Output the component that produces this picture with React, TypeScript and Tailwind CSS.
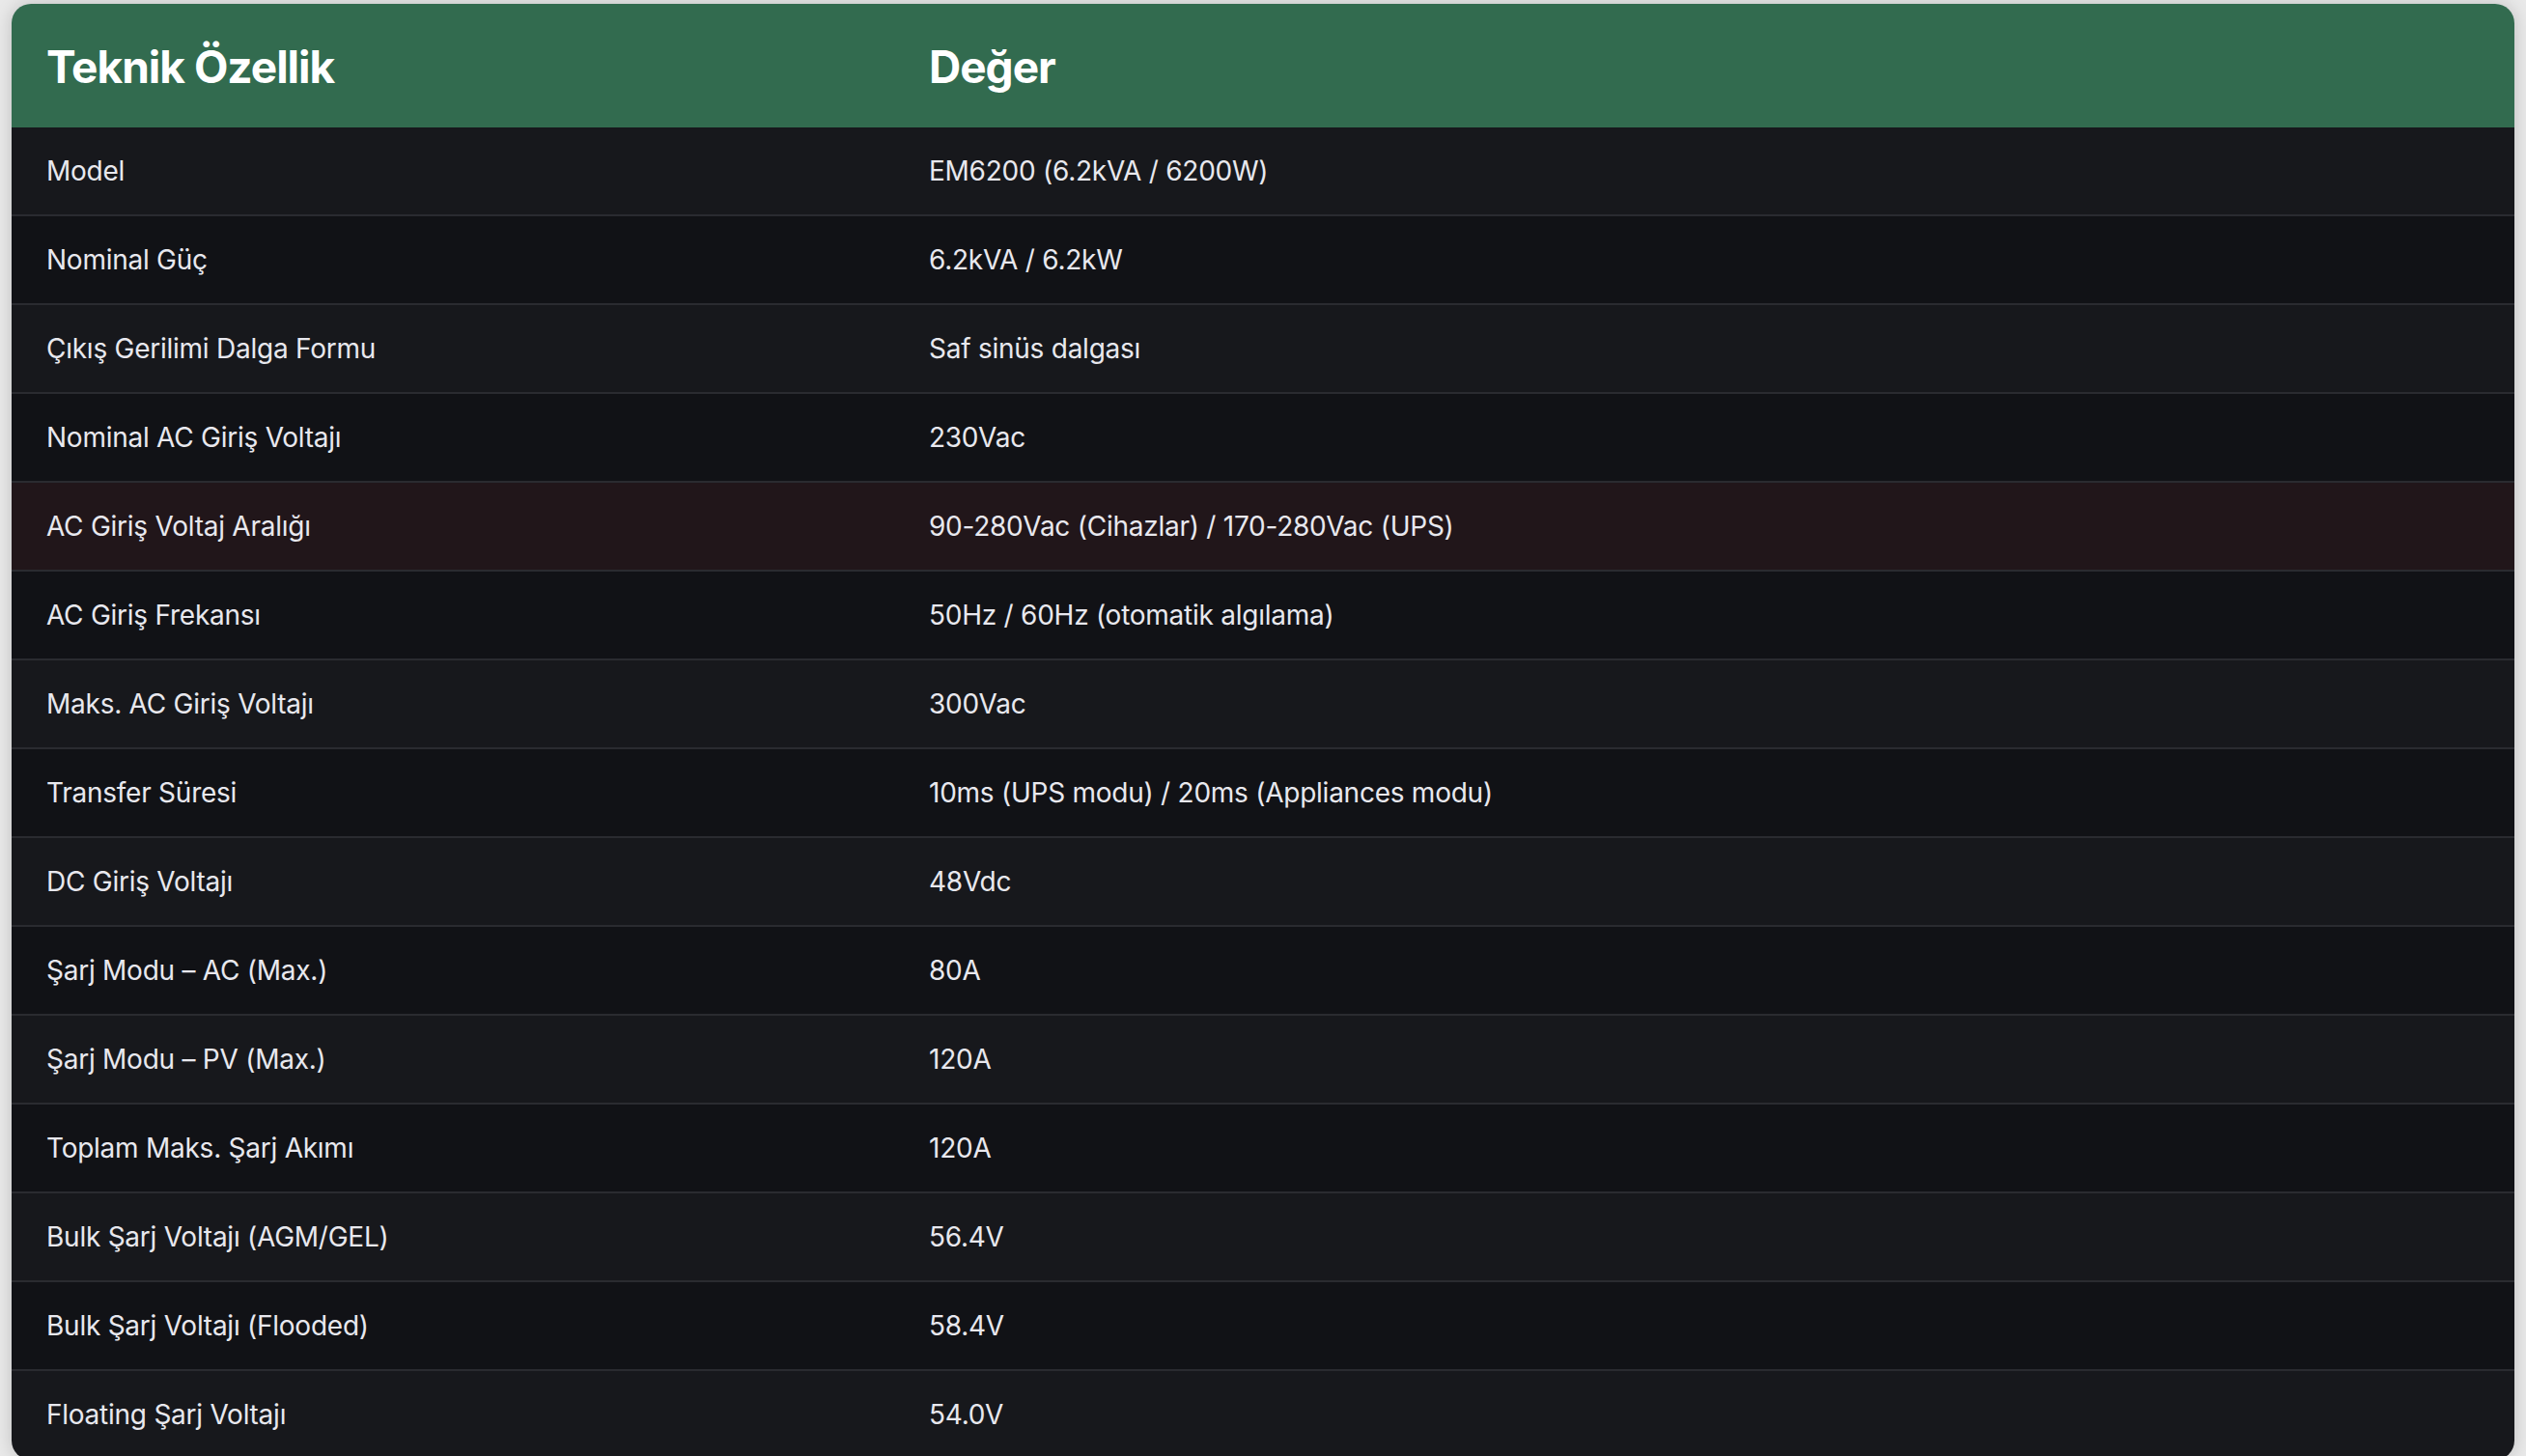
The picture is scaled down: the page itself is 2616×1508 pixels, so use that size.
import React from 'react';

const rows: [string, string][] = [
  ['Model', 'EM6200 (6.2kVA / 6200W)'],
  ['Nominal Güç', '6.2kVA / 6.2kW'],
  ['Çıkış Gerilimi Dalga Formu', 'Saf sinüs dalgası'],
  ['Nominal AC Giriş Voltajı', '230Vac'],
  ['AC Giriş Voltaj Aralığı', '90-280Vac (Cihazlar) / 170-280Vac (UPS)'],
  ['AC Giriş Frekansı', '50Hz / 60Hz (otomatik algılama)'],
  ['Maks. AC Giriş Voltajı', '300Vac'],
  ['Transfer Süresi', '10ms (UPS modu) / 20ms (Appliances modu)'],
  ['DC Giriş Voltajı', '48Vdc'],
  ['Şarj Modu – AC (Max.)', '80A'],
  ['Şarj Modu – PV (Max.)', '120A'],
  ['Toplam Maks. Şarj Akımı', '120A'],
  ['Bulk Şarj Voltajı (AGM/GEL)', '56.4V'],
  ['Bulk Şarj Voltajı (Flooded)', '58.4V'],
  ['Floating Şarj Voltajı', '54.0V'],
];

// row 4 is the one under the pointer in the shot
const HOVER = 4;

export default function App() {
  return (
    <div className="min-h-screen bg-[#e9e9e9] pt-[4px] px-[12px]" style={{ fontFamily: 'Inter, "Noto Sans", sans-serif' }}>
      <div className="overflow-hidden rounded-[20px] shadow-[0_0_18px_rgba(0,0,0,0.18)]">
        <div className="grid grid-cols-[914px_1fr] h-[128px] items-center pt-[3px] bg-[#326b4f] text-white text-[46px] font-bold tracking-[-1px]">
          <div className="pl-[36px]">Teknik Özellik</div>
          <div className="pl-[36px]">Değer</div>
        </div>
        {rows.map(([k, v], i) => (
          <div
            key={k}
            className={
              'grid grid-cols-[914px_1fr] h-[92px] items-center border-b-2 border-[#2a2b30] text-[28px] tracking-[-0.25px] text-[#e8e8ee] ' +
              (i === HOVER ? 'bg-[#21161a]' : i % 2 === 0 ? 'bg-[#17181c]' : 'bg-[#111216]')
            }
          >
            <div className="pl-[36px]">{k}</div>
            <div className="pl-[36px]">{v}</div>
          </div>
        ))}
      </div>
    </div>
  );
}
